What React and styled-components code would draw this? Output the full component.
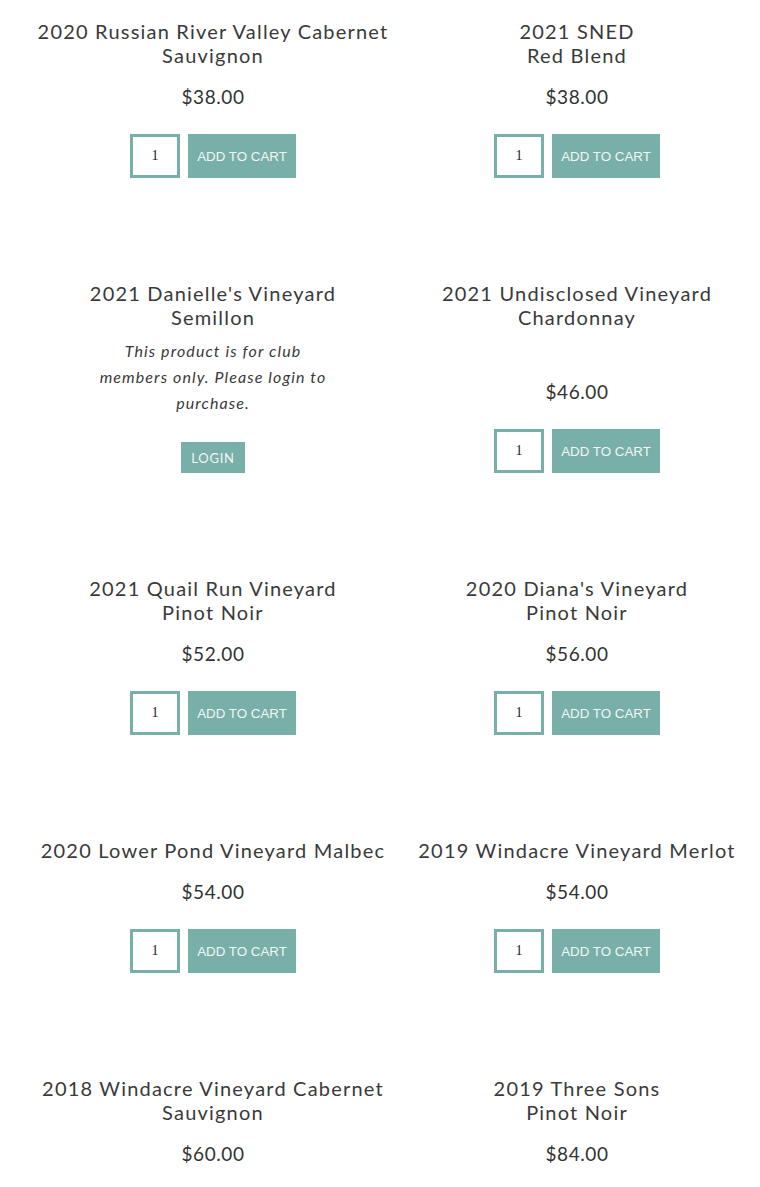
import React from "react";
import styled, { createGlobalStyle } from "styled-components";

const GlobalStyle = createGlobalStyle`
  body {
    margin: 0;
    background: #ffffff;
    font-family: "Lato", "Open Sans", sans-serif;
    color: #333333;
  }
`;

const teal = "#78afa8";

const ProductGrid = styled.div`
  display: grid;
  grid-template-columns: 364px 364px;
  row-gap: 103px;
  padding: 19px 1px 0 31px;
`;

const Card = styled.div`
  display: flex;
  flex-direction: column;
  align-items: center;
  text-align: center;
`;

const Title = styled.div`
  font-size: 20px;
  line-height: 24px;
  letter-spacing: 1.2px;
  color: #3a3a3a;
`;

const Purchase = styled.div`
  margin-top: auto;
  padding-top: 18px;
  display: flex;
  flex-direction: column;
  align-items: center;
`;

const Price = styled.div`
  font-size: 19px;
  line-height: 24px;
  letter-spacing: 0.6px;
  color: #333333;
`;

const CartRow = styled.div`
  display: flex;
  gap: 8px;
  margin-top: 25px;
`;

const Qty = styled.input`
  box-sizing: border-box;
  width: 50px;
  height: 44px;
  border: 3px solid ${teal};
  background: #ffffff;
  text-align: center;
  font-family: "Liberation Serif", serif;
  font-size: 14px;
  color: #222222;
  padding: 0;
  outline: none;
`;

const CartButton = styled.button`
  width: 108px;
  height: 44px;
  border: none;
  background: ${teal};
  color: #f1f7f6;
  font-family: "Liberation Sans", Arial, sans-serif;
  font-size: 13.33px;
  text-transform: uppercase;
  padding: 0;
  cursor: pointer;
`;

const MembersNote = styled.p`
  margin: 9px 0 0;
  width: 238px;
  font-style: italic;
  font-size: 16px;
  line-height: 26px;
  letter-spacing: 1.1px;
  color: #3a3a3a;
`;

const LoginButton = styled.button`
  margin-top: 26px;
  width: 64px;
  height: 31px;
  border: none;
  background: ${teal};
  color: #f1f7f6;
  font-family: "Lato", sans-serif;
  font-size: 13px;
  letter-spacing: 0.8px;
  padding: 0;
  cursor: pointer;
`;

const products = [
  { lines: ["2020 Russian River Valley Cabernet", "Sauvignon"], price: "$38.00" },
  { lines: ["2021 SNED", "Red Blend"], price: "$38.00" },
  { lines: ["2021 Danielle's Vineyard", "Semillon"], members: true },
  { lines: ["2021 Undisclosed Vineyard", "Chardonnay"], price: "$46.00" },
  { lines: ["2021 Quail Run Vineyard", "Pinot Noir"], price: "$52.00" },
  { lines: ["2020 Diana's Vineyard", "Pinot Noir"], price: "$56.00" },
  { lines: ["2020 Lower Pond Vineyard Malbec"], price: "$54.00" },
  { lines: ["2019 Windacre Vineyard Merlot"], price: "$54.00" },
  { lines: ["2018 Windacre Vineyard Cabernet", "Sauvignon"], price: "$60.00" },
  { lines: ["2019 Three Sons", "Pinot Noir"], price: "$84.00" },
];

const Product = ({ lines, price, members }) => (
  <Card>
    <Title>
      {lines.map((l, i) => (
        <div key={i}>{l}</div>
      ))}
    </Title>
    {members ? (
      <>
        <MembersNote>This product is for club members only. Please login to purchase.</MembersNote>
        <LoginButton>LOGIN</LoginButton>
      </>
    ) : (
      <Purchase>
        <Price>{price}</Price>
        <CartRow>
          <Qty type="text" defaultValue="1" />
          <CartButton>Add to cart</CartButton>
        </CartRow>
      </Purchase>
    )}
  </Card>
);

const App = () => (
  <>
    <GlobalStyle />
    <ProductGrid>
      {products.map((p, i) => (
        <Product key={i} {...p} />
      ))}
    </ProductGrid>
  </>
);

export default App;
